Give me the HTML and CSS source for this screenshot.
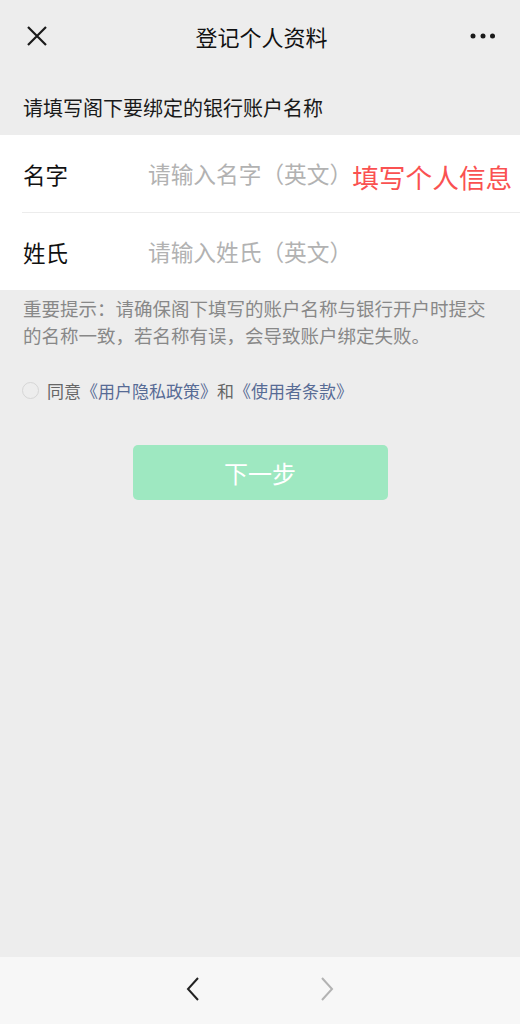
FILE: index.html
```html
<!DOCTYPE html>
<html lang="zh-CN">
<head>
<meta charset="utf-8">
<title>登记个人资料</title>
<link rel="stylesheet" href="styles.css">
</head>
<body>
<div class="page">
  <header class="nav">
    <span class="nav-btn">
      <svg width="20" height="20" viewBox="0 0 20 20"><path d="M1 1L19 19M19 1L1 19" stroke="#1a1a1a" stroke-width="2.2" fill="none"/></svg>
    </span>
    <h1 class="nav-title">登记个人资料</h1>
    <span class="nav-btn nav-more">
      <svg width="26" height="6" viewBox="0 0 26 6"><circle cx="3" cy="3" r="2.5" fill="#1a1a1a"/><circle cx="13" cy="3" r="2.5" fill="#1a1a1a"/><circle cx="22.5" cy="3" r="2.5" fill="#1a1a1a"/></svg>
    </span>
  </header>

  <div class="section-title">请填写阁下要绑定的银行账户名称</div>

  <div class="card">
    <div class="row">
      <span class="label">名字</span>
      <span class="placeholder">请输入名字（英文）</span>
      <span class="note">填写个人信息</span>
    </div>
    <div class="divider"></div>
    <div class="row">
      <span class="label">姓氏</span>
      <span class="placeholder">请输入姓氏（英文）</span>
    </div>
  </div>

  <p class="tip">重要提示：请确保阁下填写的账户名称与银行开户时提交的名称一致，若名称有误，会导致账户绑定失败。</p>

  <div class="agree">
    <span class="radio"></span>
    <span class="agree-text">同意<span class="link">《用户隐私政策》</span>和<span class="link">《使用者条款》</span></span>
  </div>

  <div class="btn-wrap">
    <div class="btn">下一步</div>
  </div>

  <footer class="toolbar">
    <svg width="14" height="24" viewBox="0 0 14 24"><polyline points="12,1 2,12 12,23" stroke="#222" stroke-width="2" fill="none"/></svg>
    <svg width="14" height="24" viewBox="0 0 14 24"><polyline points="2,1 12,12 2,23" stroke="#b3b3b3" stroke-width="2" fill="none"/></svg>
  </footer>
</div>
</body>
</html>
```

FILE: styles.css
```css
html, body {
  margin: 0;
  padding: 0;
  background: #ededed;
}
body {
  font-family: "Noto Sans CJK SC", "Noto Sans", sans-serif;
  color: #111;
}
.page {
  display: flex;
  flex-direction: column;
  height: 1024px;
  overflow: hidden;
}
.nav {
  height: 72px;
  display: flex;
  align-items: center;
  justify-content: space-between;
  padding: 0 24px 0 27px;
  box-sizing: border-box;
}
.nav-btn {
  width: 26px;
  display: flex;
  align-items: center;
}
.nav-btn svg { display: block; }
.nav-more { justify-content: flex-end; }
.nav-title {
  margin: 0;
  font-size: 22px;
  font-weight: 400;
  line-height: 30px;
  color: #111;
}
.section-title {
  padding: 22px 23px 0;
  font-size: 20px;
  line-height: 28px;
  color: #1a1a1a;
  margin-bottom: 13px;
}
.card {
  background: #fff;
}
.row {
  height: 77px;
  display: flex;
  align-items: center;
  padding-left: 23px;
  white-space: nowrap;
}
.divider {
  height: 1px;
  background: #ececec;
  margin-left: 22px;
}
.label {
  width: 125px;
  font-size: 22.5px;
  color: #111;
  flex: none;
}
.placeholder {
  font-size: 22.7px;
  color: #b2b2b2;
}
.note {
  font-size: 26.7px;
  color: #fa5151;
  padding-top: 6px;
}
.tip {
  margin: 0;
  padding: 5px 20px 0 23px;
  font-size: 18.5px;
  line-height: 27px;
  color: #888;
}
.agree {
  margin-top: 29px;
  padding-left: 22px;
  display: flex;
  align-items: center;
  height: 24px;
}
.radio {
  width: 15px;
  height: 15px;
  border: 1px solid #d6d6d6;
  border-radius: 50%;
  margin-right: 8px;
  flex: none;
}
.agree-text {
  font-size: 17px;
  color: #666;
}
.link {
  color: #576b95;
}
.btn-wrap {
  display: flex;
  justify-content: center;
  margin-top: 43px;
}
.btn {
  width: 255px;
  height: 55px;
  border-radius: 5px;
  background: #9ee8c1;
  color: #fff;
  font-size: 24px;
  display: flex;
  align-items: center;
  justify-content: center;
}
.toolbar {
  margin-top: auto;
  height: 67px;
  padding-bottom: 3px;
  box-sizing: border-box;
  background: #f7f7f7;
  display: flex;
  align-items: center;
  justify-content: center;
  gap: 120px;
}
.toolbar svg { display: block; }
```
